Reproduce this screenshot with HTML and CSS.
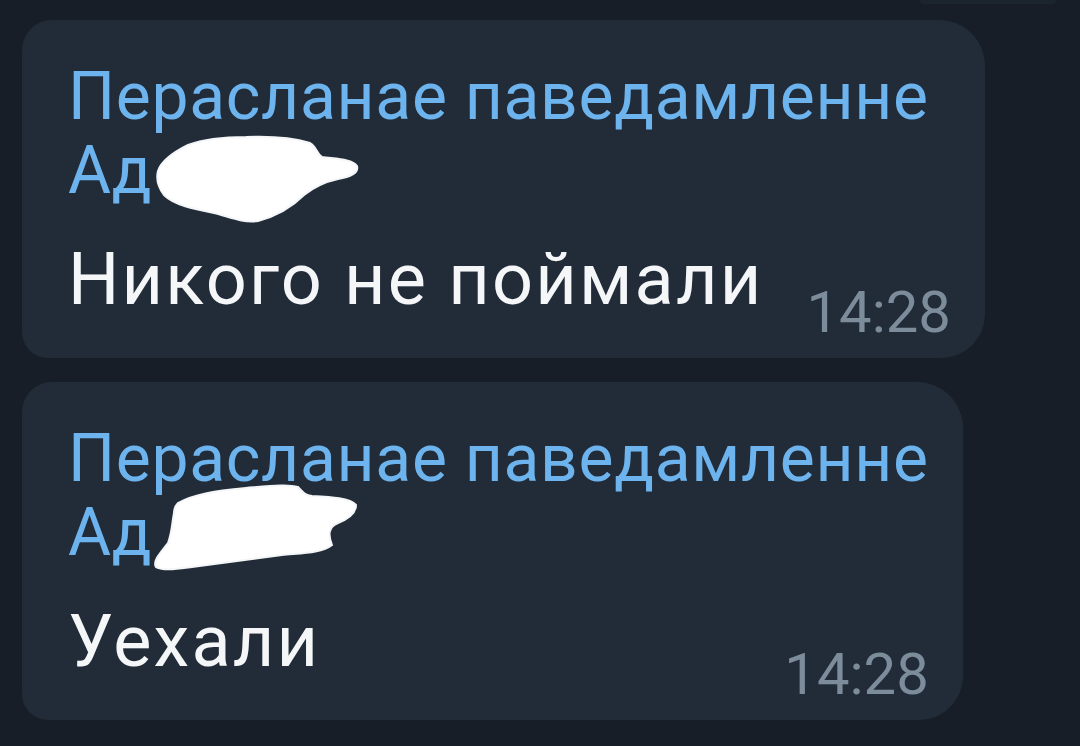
FILE: index.html
```html
<!DOCTYPE html>
<html lang="be">
<head>
<meta charset="utf-8">
<link rel="stylesheet" href="styles.css">
</head>
<body>
<div class="chat">
  <div class="prev-tail"></div>
  <div class="bubble">
    <div class="fwd">
      <div class="fwd-line">Перасланае паведамленне</div>
      <div class="fwd-line">Ад<span class="redact"><svg class="redact-svg r1" viewBox="0 0 206 88" width="206" height="88"><path d="M4,36 C8,24 22,16 34,10 C50,4 70,2 92,2 C116,1 140,3 156,8 C163,12 162,18 168,22 C182,24 198,24 203,31 C205,38 196,42 184,44 C170,47 160,52 150,60 C140,70 126,80 104,86 C88,88 76,82 60,78 C40,74 20,70 10,60 C4,52 2,44 4,36 Z" fill="#ffffff" stroke="#f4f6f8" stroke-width="2"/></svg></span></div>
    </div>
    <div class="msg-row">
      <span class="msg-text">Никого не поймали</span>
      <span class="time">14:28</span>
    </div>
  </div>
  <div class="bubble">
    <div class="fwd">
      <div class="fwd-line">Перасланае паведамленне</div>
      <div class="fwd-line">Ад<span class="redact"><svg class="redact-svg r2" viewBox="0 0 206 90" width="206" height="90"><path d="M26,20 C40,12 60,8 94,5 C118,3 136,1 146,4 C150,8 152,12 160,13 C180,14 198,15 204,22 C204,30 196,36 186,40 C176,44 176,52 180,62 C170,70 150,70 130,72 C100,76 70,80 40,84 C24,86 12,88 4,84 C0,78 10,68 16,60 C20,50 20,40 22,30 C22,26 24,22 26,20 Z" fill="#ffffff" stroke="#f4f6f8" stroke-width="2"/></svg></span></div>
    </div>
    <div class="msg-row">
      <span class="msg-text">Уехали</span>
      <span class="time">14:28</span>
    </div>
  </div>
</div>
</body>
</html>
```

FILE: styles.css
```css
html, body {
  margin: 0;
  padding: 0;
  background: #171e27;
}

body {
  width: 1080px;
  height: 746px;
  overflow: hidden;
  font-family: Roboto, "Noto Sans", sans-serif;
}

.chat {
  display: flex;
  flex-direction: column;
  align-items: flex-start;
  gap: 24px;
  padding: 0 0 0 22px;
}

.prev-tail {
  align-self: flex-end;
  width: 136px;
  height: 4px;
  margin: 0 24px -8px 0;
  background: #1c242e;
  border-radius: 0 0 20px 20px;
}

.bubble {
  background: #222c38;
  border-radius: 30px 46px 44px 26px;
  padding: 40px 34px 14px 46px;
  display: flex;
  flex-direction: column;
}

.fwd {
  color: #6db4ef;
  font-size: 66px;
  line-height: 74px;
  letter-spacing: 0.7px;
}

.fwd-line {
  white-space: nowrap;
}

.redact {
  display: inline-block;
  position: relative;
  width: 206px;
  height: 0;
  margin-left: 2px;
}

.redact-svg {
  position: absolute;
  left: 0;
}

.r1 {
  top: -58px;
}

.r2 {
  top: -72px;
  left: -2px;
}

.msg-row {
  display: flex;
  align-items: flex-start;
  margin-top: 32px;
}

.msg-text {
  color: #f4f6f8;
  font-size: 72px;
  line-height: 80px;
  letter-spacing: 2.2px;
  white-space: nowrap;
}

.time {
  color: #7d8c9b;
  font-size: 58px;
  line-height: 64px;
  margin-top: 40px;
  margin-left: auto;
  padding-left: 43px;
}
```
